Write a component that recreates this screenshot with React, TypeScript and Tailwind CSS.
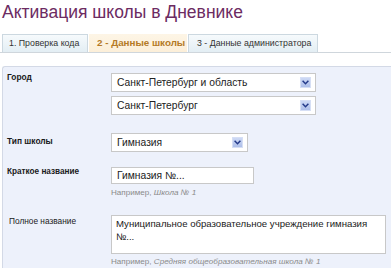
import React from "react";

const Arrow = () => (
  <span className="absolute right-[4px] top-[3px] w-[11px] h-[11px] bg-[linear-gradient(#cdd9f5,#aebfe9)] border border-[#d6dff5] flex items-center justify-center">
    <svg width="7" height="5" viewBox="0 0 7 5">
      <path d="M0.6 0.8 L3.5 3.7 L6.4 0.8" fill="none" stroke="#243a8a" strokeWidth="1.5" />
    </svg>
  </span>
);

const Select = ({ text, w }: { text: string; w: string }) => (
  <div className={`relative h-[19px] ${w} bg-white border border-[#c8c8c8] text-[10.3px] leading-[17px] pl-[5px] text-[#222]`}>
    {text}
    <Arrow />
  </div>
);

export default function App() {
  return (
    <div className="w-[391px] h-[268px] overflow-hidden bg-white font-['Liberation_Sans',Arial,sans-serif]">
      <h1 className="text-[17.5px] leading-[20px] text-[#6c2b62] pl-[2px] pt-[2px]">
        Активация школы в Дневнике
      </h1>
      <div className="mt-[12px] flex items-end pl-[2px] border-b border-[#cfd6dc] h-[19px]">
        <div className="h-[18px] w-[86px] pl-[6px] bg-[linear-gradient(#f6fafc,#e3eef4)] border border-b-0 border-[#ccd8e0] text-[8.8px] leading-[17px] text-[#333]">
          1. Проверка кода
        </div>
        <div className="h-[18px] w-[98px] ml-[1px] pl-[8px] bg-[linear-gradient(#fdf5e6,#fcefd9)] text-[9.8px] leading-[17px] font-bold text-[#b47a26]">
          2 - Данные школы
        </div>
        <div className="h-[18px] w-[130px] ml-[1px] pl-[8px] bg-[linear-gradient(#f6fafc,#e3eef4)] border border-b-0 border-[#ccd8e0] text-[8.8px] leading-[17px] text-[#333]">
          3 - Данные администратора
        </div>
      </div>
      <div className="mt-[13px] ml-[2px] bg-[#edf1fb] border-t border-l border-[#d3d9e6] rounded-tl-[3px] h-[220px] pt-[6px] text-[#1a1a1a]">
        <div className="flex">
          <div className="w-[108px] pl-[4px] font-bold text-[8.4px] leading-[8px]">Город</div>
          <div className="flex flex-col gap-[4px]">
            <Select text="Санкт-Петербург и область" w="w-[205px]" />
            <Select text="Санкт-Петербург" w="w-[205px]" />
          </div>
        </div>
        <div className="flex mt-[18px]">
          <div className="w-[108px] pl-[4px] pt-[3px] font-bold text-[8.4px] leading-[10px]">Тип школы</div>
          <Select text="Гимназия" w="w-[137px]" />
        </div>
        <div className="flex mt-[15px]">
          <div className="w-[108px] pl-[4px] font-bold text-[8.2px] leading-[10px]">Краткое название</div>
          <div>
            <div className="h-[17px] w-[143px] bg-white border border-[#c8c8c8] text-[10.3px] leading-[15px] pl-[5px]">
              Гимназия №...
            </div>
            <div className="text-[8.1px] text-[#8a8a8a] mt-[4px] leading-[10px]">
              Например, <i>Школа № 1</i>
            </div>
          </div>
        </div>
        <div className="flex mt-[17px]">
          <div className="w-[108px] pl-[6px] pt-[1px] text-[8.3px] leading-[10px]">Полное название</div>
          <div>
            <div className="h-[39px] w-[275px] bg-white border border-[#c8c8c8] text-[9.6px] leading-[13px] pl-[4px] pt-[1px]">
              Муниципальное образовательное учреждение гимназия №...
            </div>
            <div className="text-[8.1px] text-[#8a8a8a] mt-[3px] leading-[10px]">
              Например, <i>Средняя общеобразовательная школа № 1</i>
            </div>
          </div>
        </div>
      </div>
    </div>
  );
}
